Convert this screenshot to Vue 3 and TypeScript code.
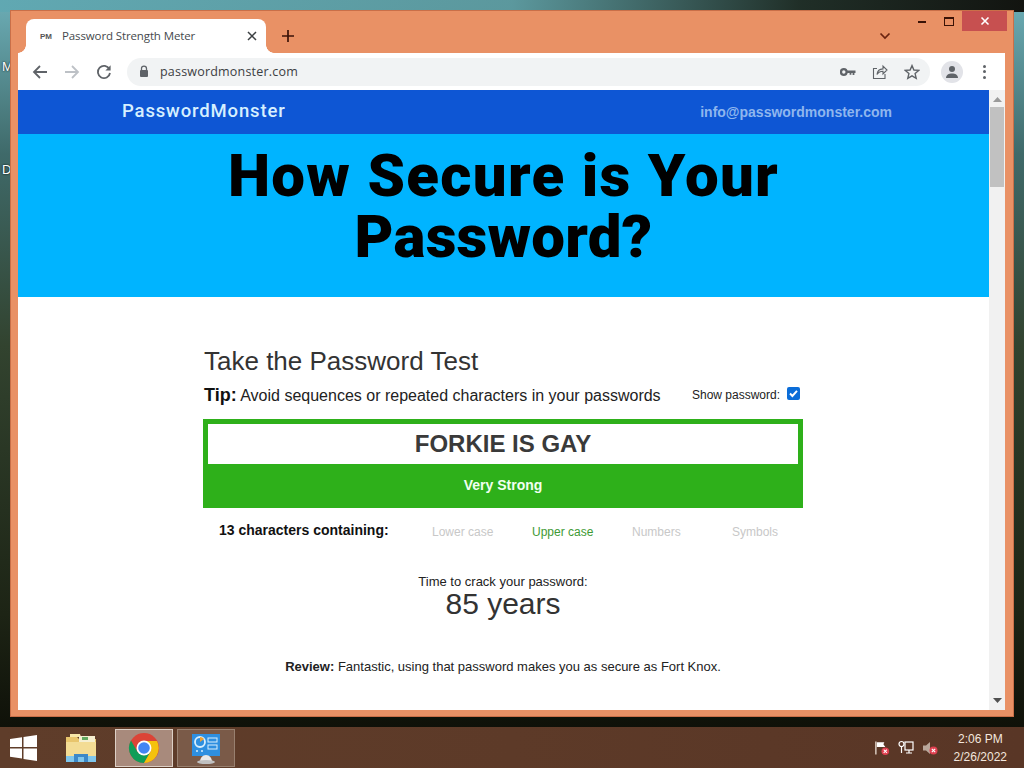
<script setup lang="ts">
const traits: { label: string; on: boolean }[] = [
  { label: 'Lower case', on: false },
  { label: 'Upper case', on: true },
  { label: 'Numbers', on: false },
  { label: 'Symbols', on: false },
]
</script>

<template>
  <div class="desktop">
    <span class="desk-label m">M</span>
    <span class="desk-label d">D</span>

    <div class="window">
      <div class="caption">
        <div class="tab">
          <span class="favicon">PM</span>
          <span class="tab-title">Password Strength Meter</span>
          <svg class="tab-x" width="10" height="10" viewBox="0 0 10 10"><path d="M1 1l8 8M9 1l-8 8" stroke="#3c4043" stroke-width="1.5"/></svg>
        </div>
        <svg class="new-tab" width="14" height="14" viewBox="0 0 14 14"><path d="M7 1v12M1 7h12" stroke="#3b1208" stroke-width="1.7"/></svg>
        <svg class="tab-list" width="12" height="8" viewBox="0 0 12 8"><path d="M1.500 1.500L6 6l4.500-4.500" fill="none" stroke="#6a2410" stroke-width="1.7"/></svg>
        <div class="win-buttons">
          <span class="wb"><i class="min"></i></span>
          <span class="wb"><i class="max"></i></span>
          <span class="wb close"><svg width="10" height="10" viewBox="0 0 10 10"><path d="M1.500 1.500l7 7M8.500 1.500l-7 7" stroke="#fff" stroke-width="1.6"/></svg></span>
        </div>
      </div>

      <div class="toolbar">
        <svg class="nav" width="16" height="16" viewBox="0 0 16 16"><path d="M15 8H2M8 2L2 8l6 6" fill="none" stroke="#5f6368" stroke-width="1.8"/></svg>
        <svg class="nav" width="16" height="16" viewBox="0 0 16 16"><path d="M1 8h13M8 2l6 6-6 6" fill="none" stroke="#bdc1c6" stroke-width="1.8"/></svg>
        <svg class="nav" width="16" height="16" viewBox="0 0 16 16"><path d="M13.400 5.200A6.100 6.100 0 1 0 14 9" fill="none" stroke="#5f6368" stroke-width="1.8"/><path d="M14.600 1.200v5.200H9.400z" fill="#5f6368"/></svg>
        <div class="omnibox">
          <svg width="10" height="13" viewBox="0 0 10 13"><path d="M2.500 5.500V3.600a2.500 2.500 0 0 1 5 0v1.900" fill="none" stroke="#5f6368" stroke-width="1.3"/><rect x="1" y="5" width="8" height="7" rx="1" fill="#5f6368"/></svg>
          <span class="url">passwordmonster.com</span>
          <span class="omni-icons">
            <svg width="16" height="10" viewBox="0 0 16 10"><circle cx="3.800" cy="5" r="2.800" fill="none" stroke="#5f6368" stroke-width="2.2"/><path d="M6.500 3.400H15.500V6H14.400V8H12.600V6H11.400V7.800H9.600V6H6.500z" fill="#5f6368"/></svg>
            <svg width="16" height="16" viewBox="0 0 16 16"><path d="M13 10v4.500H1.500V4.500H5" fill="none" stroke="#5f6368" stroke-width="1.1"/><path d="M5 10.500c.4-3.400 3-5.500 6-5.600V2l4 4-4 4V7.300c-2.600 0-4.600 1-6 3.200z" fill="none" stroke="#5f6368" stroke-width="1.1"/></svg>
            <svg width="16" height="16" viewBox="0 0 16 16"><path d="M8 1.600l1.900 4.400 4.800.4-3.600 3.200 1.100 4.700L8 11.800l-4.200 2.500 1.100-4.700-3.600-3.200 4.800-.4z" fill="none" stroke="#5f6368" stroke-width="1.4"/></svg>
          </span>
        </div>
        <span class="avatar">
          <svg width="14" height="14" viewBox="0 0 14 14"><circle cx="7" cy="4" r="3" fill="#5f6368"/><path d="M1 13c0-3.200 2.800-4.600 6-4.600s6 1.400 6 4.600z" fill="#5f6368"/></svg>
        </span>
        <span class="kebab"><i></i><i></i><i></i></span>
      </div>

      <div class="viewport">
        <main class="page">
          <header class="brandbar">
            <span class="brand">PasswordMonster</span>
            <span class="mail">info@passwordmonster.com</span>
          </header>
          <section class="hero">
            <h1><span>How Secure is Your</span><span class="line-two">Password?</span></h1>
          </section>
          <section class="test">
            <h2>Take the Password Test</h2>
            <div class="tip-row">
              <p class="tip"><b>Tip:</b> Avoid sequences or repeated characters in your passwords</p>
              <label class="show">Show password: <span class="check"><svg width="11" height="11" viewBox="0 0 11 11"><path d="M2 5.500l2.400 2.500L9 2.800" fill="none" stroke="#fff" stroke-width="1.9"/></svg></span></label>
            </div>
            <div class="meter">
              <div class="pw">FORKIE IS GAY</div>
              <div class="strength">Very Strong</div>
            </div>
            <div class="chars">
              <b class="count">13 characters containing:</b>
              <span v-for="t in traits" :key="t.label" class="trait" :class="{ on: t.on }">{{ t.label }}</span>
            </div>
            <div class="time-label">Time to crack your password:</div>
            <div class="time">85 years</div>
            <p class="review"><b>Review:</b> Fantastic, using that password makes you as secure as Fort Knox.</p>
          </section>
        </main>
        <aside class="scrollbar">
          <svg width="9" height="5" viewBox="0 0 9 5"><path d="M4.500 0L9 5H0z" fill="#9a9a9a"/></svg>
          <div class="thumb"></div>
          <svg class="down" width="9" height="5" viewBox="0 0 9 5"><path d="M4.500 5L9 0H0z" fill="#505050"/></svg>
        </aside>
      </div>
    </div>

    <footer class="taskbar">
      <svg class="start" width="28" height="26" viewBox="0 0 28 26"><path d="M0 4l12-1.700V12H0zM13.500 2L27 0v12H13.500zM0 13.500h12v10L0 21.800zM13.500 13.500H27V26l-13.500-2z" fill="#fff"/></svg>
      <div class="task plain">
        <svg width="34" height="32" viewBox="0 0 34 32">
          <path d="M2 5h11l2 2h17v20H2z" fill="#e8c56c"/>
          <path d="M6 2h10l1 3H6z" fill="#f7e7a8"/>
          <rect x="15" y="4" width="16" height="6" fill="#f5efd0"/>
          <rect x="18" y="5" width="6" height="3" fill="#62a860"/>
          <rect x="2" y="10" width="30" height="14" fill="#f3dc94"/>
          <path d="M2 24h30v6H2z" fill="#7fc6ec"/>
          <path d="M10 30v-8h14v8h-4v-5h-6v5z" fill="#3c88c8"/>
        </svg>
      </div>
      <div class="task active">
        <svg width="32" height="32" viewBox="0 0 32 32">
          <circle cx="16" cy="16" r="15" fill="#db4437"/>
          <path d="M3 8.500A15 15 0 0 0 16 31l6.500-11.200L16 23.500 9.500 20 3 8.500z" fill="#0f9d58"/>
          <path d="M16 9h13A15 15 0 0 1 16 31l6.500-11.200A7.500 7.500 0 0 0 16 9z" fill="#f4c20d"/>
          <circle cx="16" cy="16" r="7.500" fill="#fff"/>
          <circle cx="16" cy="16" r="5.800" fill="#4285f4"/>
        </svg>
      </div>
      <div class="task idle">
        <svg width="32" height="32" viewBox="0 0 32 32">
          <rect x="2" y="2" width="28" height="22" fill="#2e8fe0"/>
          <circle cx="10" cy="10" r="5" fill="none" stroke="#d8eefc" stroke-width="1.8"/>
          <path d="M10 10V5a5 5 0 0 1 4 2z" fill="#f0a030"/>
          <rect x="18" y="6" width="9" height="4" fill="none" stroke="#d8eefc"/>
          <rect x="18" y="13" width="9" height="4" fill="none" stroke="#d8eefc"/>
          <circle cx="7" cy="19" r="1" fill="#d8eefc"/>
          <circle cx="12" cy="19" r="1" fill="#d8eefc"/>
          <path d="M10 30c0-4 2.500-7 6-7s6 3 6 7z" fill="#e8e8e8"/>
          <ellipse cx="16" cy="30" rx="9" ry="2" fill="#c0c0c0"/>
        </svg>
      </div>
      <div class="tray">
        <svg width="16" height="16" viewBox="0 0 17 16"><path d="M2 1v14" stroke="#f4e9df" stroke-width="1.3"/><path d="M3 2h8l-1 2 2 3H3z" fill="#fff"/><circle cx="12" cy="11.500" r="4" fill="#e04050"/><path d="M10.300 9.800l3.400 3.400M13.700 9.800l-3.400 3.400" stroke="#fff" stroke-width="1.1"/></svg>
        <svg width="16" height="16" viewBox="0 0 16 16"><circle cx="3.500" cy="4" r="2.500" fill="none" stroke="#fff" stroke-width="1.2"/><path d="M3.500 7v6" stroke="#fff" stroke-width="1.2"/><rect x="7" y="2" width="8" height="8" fill="none" stroke="#fff" stroke-width="1.2"/><path d="M8 13h6M11 10v3" stroke="#fff" stroke-width="1.2"/></svg>
        <svg width="16" height="16" viewBox="0 0 16 16"><path d="M1 5.500h3L8 2v12L4 10.500H1z" fill="#b9a79b"/><circle cx="11.500" cy="10.500" r="4" fill="#e04050"/><path d="M9.800 8.800l3.400 3.400M13.200 8.800l-3.400 3.400" stroke="#fff" stroke-width="1.1"/></svg>
      </div>
      <div class="clock"><span>2:06 PM</span><span>2/26/2022</span></div>
    </footer>
  </div>
</template>

<style>
html, body { margin: 0; padding: 0; }
</style>

<style scoped>
.desktop {
  position: relative;
  width: 1024px;
  height: 768px;
  overflow: hidden;
  font-family: "Liberation Sans", Arial, sans-serif;
  background:
    linear-gradient(90deg, rgba(96,168,178,.95) 0, rgba(90,150,155,.9) 50%, rgba(28,40,32,.95) 78%, #121410 100%) top / 100% 12px no-repeat,
    linear-gradient(180deg, #6cadb6 0, #3f6a6a 20%, #32432f 45%, #1d2415 80%, #0a0a04 100%);
}
.desk-label { position: absolute; left: 2px; font-size: 13px; line-height: 15px; color: #fff; text-shadow: 0 0 2px #000; }
.m { top: 59px; }
.d { top: 162px; }

.window {
  position: absolute;
  left: 10px;
  top: 10px;
  width: 1004px;
  height: 707px;
  box-sizing: border-box;
  background: #e99165;
  border: 1px solid #c96f48;
  padding: 0 8px 6px 7px;
  display: flex;
  flex-direction: column;
}
.caption { height: 42px; display: flex; align-items: flex-end; position: relative; flex: none; }
.tab {
  width: 240px;
  height: 34px;
  margin-left: 8px;
  background: #fff;
  border-radius: 8px 8px 0 0;
  display: flex;
  align-items: center;
  padding: 0 9px 0 14px;
  box-sizing: border-box;
  position: relative;
}
.tab::before, .tab::after {
  content: "";
  position: absolute;
  bottom: 0;
  width: 8px;
  height: 8px;
}
.tab::before { left: -8px; background: radial-gradient(circle at 0 0, transparent 7.500px, #fff 8px); }
.tab::after { right: -8px; background: radial-gradient(circle at 100% 0, transparent 7.500px, #fff 8px); }
.favicon { font-size: 8px; font-weight: 700; color: #555; width: 22px; letter-spacing: -.2px; flex: none; }
.tab-title { font: 11.500px "Open Sans", sans-serif; color: #45494d; flex: 1; letter-spacing: -.12px; margin-top: -2px; }
.tab-x { flex: none; }
.new-tab { margin: 0 0 10px 15px; }
.tab-list { position: absolute; left: 861px; top: 21px; }
.win-buttons { position: absolute; right: -2px; top: 0; display: flex; align-items: flex-start; }
.wb { width: 27px; height: 20px; display: flex; align-items: center; justify-content: center; }
.wb.close { width: 45px; margin-left: 0; background: #c75050; }
.min { width: 8px; height: 2px; background: #3a1206; margin-top: 2px; }
.max { width: 8px; height: 6px; border: 1px solid #3a1206; border-top-width: 2px; }

.toolbar {
  height: 37px;
  flex: none;
  background: #fff;
  display: flex;
  align-items: center;
  padding: 0 19px 0 14px;
  gap: 16px;
}
.nav { flex: none; }
.omnibox {
  flex: 1;
  height: 28px;
  margin-left: -1px;
  border-radius: 14px;
  background: #f1f3f4;
  display: flex;
  align-items: center;
  padding: 0 10px 0 12px;
  gap: 11px;
}
.url { font: 12.500px "Open Sans", sans-serif; color: #3c4043; letter-spacing: .2px; flex: 1; }
.omni-icons { display: flex; align-items: center; gap: 16px; }
.avatar { width: 22px; height: 22px; border-radius: 50%; background: #e2e3e8; display: flex; align-items: center; justify-content: center; margin-left: -5px; }
.kebab { display: flex; flex-direction: column; gap: 2.500px; margin-left: 4px; }
.kebab i { width: 3px; height: 3px; border-radius: 50%; background: #5f6368; display: block; }

.viewport { flex: 1; display: flex; background: #fff; min-height: 0; }
.page { flex: 1; min-width: 0; overflow: hidden; }
.brandbar {
  height: 44px;
  background: #0e56d4;
  display: flex;
  align-items: center;
  justify-content: space-between;
  padding: 0 97px 0 104px;
}
.brand { font: 500 18.500px/20px Roboto, sans-serif; color: #d6f0ff; letter-spacing: .85px; margin-top: -3px; }
.mail { font-size: 14px; font-weight: 700; color: #8fb6ee; }
.hero { height: 163px; background: #00b4ff; text-align: center; }
.hero h1 {
  margin: 0;
  padding-top: 11px;
  font: 900 60px/61px Roboto, sans-serif;
  letter-spacing: 1.300px;
  color: #000;
  display: flex;
  flex-direction: column;
}
.line-two { letter-spacing: .2px; }
.test { width: 600px; margin: 0 0 0 185px; color: #222; }
.test h2 { font-weight: 400; font-size: 26px; line-height: 30px; margin: 49px 0 0 1px; color: #333; }
.tip-row { display: flex; align-items: center; justify-content: space-between; margin: 5px 3px 0 1px; height: 28px; }
.tip { margin: 0; font-size: 16px; color: #222; }
.tip b { font-size: 18px; color: #111; }
.show { font-size: 12px; color: #222; display: flex; align-items: center; gap: 7px; }
.check { width: 13px; height: 13px; border-radius: 2px; background: #0b6dd8; display: flex; align-items: center; justify-content: center; margin-top: -3px; }
.meter { margin-top: 10px; background: #2eb01a; padding: 5px; height: 89px; box-sizing: border-box; }
.pw { height: 40px; background: #fff; text-align: center; font-size: 24px; font-weight: 700; line-height: 40px; color: #3a3a3a; }
.strength { text-align: center; color: #f0fff0; font-size: 14px; font-weight: 700; line-height: 42px; }
.chars { display: flex; align-items: center; height: 44px; font-size: 12px; }
.count { font-size: 14px; color: #111; margin-left: 16px; width: 213px; flex: none; }
.trait { color: #c8c8c8; width: 100px; flex: none; margin-top: 3px; }
.trait.on { color: #3e9a34; }
.time-label { text-align: center; font-size: 13px; line-height: 15px; margin-top: 22px; color: #222; }
.time { text-align: center; font-size: 30px; line-height: 30px; color: #333; }
.review { text-align: center; font-size: 13px; line-height: 15px; margin: 40px 0 0; color: #222; }

.scrollbar { width: 16px; background: #f1f1f1; flex: none; display: flex; flex-direction: column; align-items: center; padding-top: 7px; box-sizing: border-box; position: relative; }
.thumb { width: 14px; height: 80px; margin-top: 5px; background: #c1c1c1; }
.down { position: absolute; bottom: 7px; }

.taskbar {
  position: absolute;
  left: 0; right: 0; bottom: 0;
  height: 41px;
  background: linear-gradient(90deg, #5f3d2a 0, #5d3a28 50%, #593626 100%);
  display: flex;
  align-items: center;
}
.start { margin-left: 10px; flex: none; }
.task { width: 58px; height: 38px; box-sizing: border-box; display: flex; align-items: center; justify-content: center; flex: none; }
.plain { margin-left: 14px; }
.active { margin-left: 5px; background: #a88a7c; border: 1px solid #ddd0c6; }
.idle { margin-left: 4px; background: #7a5a48; border: 1px solid #98806f; }
.tray { margin-left: auto; display: flex; align-items: center; gap: 8px; }
.clock { display: flex; flex-direction: column; align-items: center; color: #f3e7de; font-size: 12px; line-height: 18px; margin: 0 17px 0 16px; }
</style>
